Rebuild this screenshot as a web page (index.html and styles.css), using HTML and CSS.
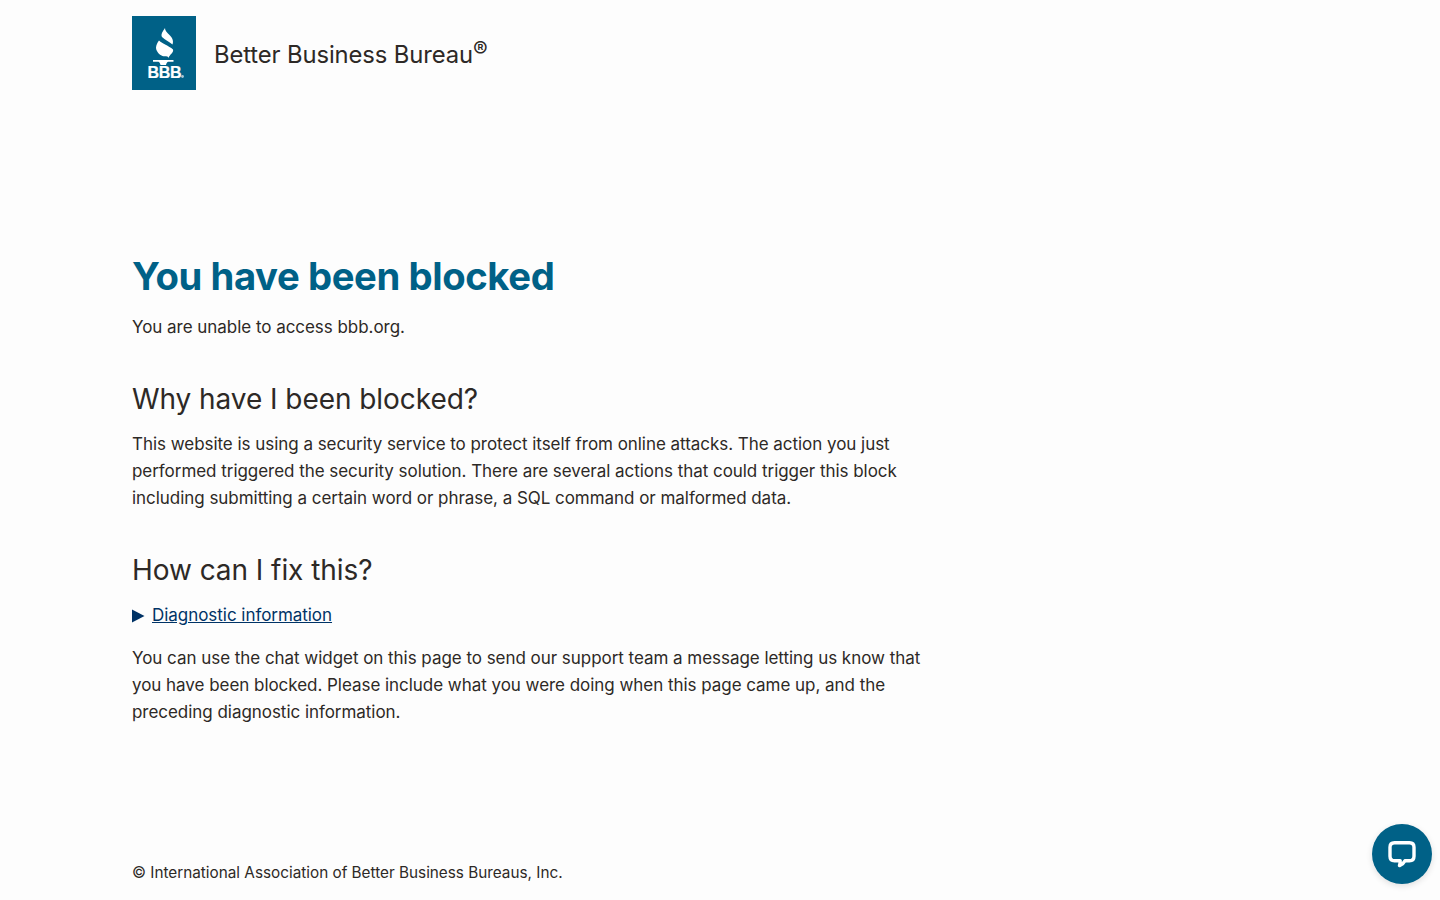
FILE: index.html
```html
<!DOCTYPE html>
<html lang="en">
<head>
<meta charset="utf-8">
<title>You have been blocked</title>
<link rel="stylesheet" href="styles.css">
</head>
<body>
<div class="page">
  <header class="brand">
    <div class="logo">
      <svg width="64" height="74" viewBox="0 0 64 74">
        <path fill="#fff" d="M33 12C32.800 14.500 35 16.500 37.500 19C40 21.500 42 24.500 40.500 28.500C37 25.500 33 24 30 21C28.500 18 31 15 33 12Z"/>
        <path fill="#fff" d="M27 24.500C30.500 28 36.500 29.500 41 33.500C42 36.500 38 38 36.500 42C36 39.500 33.500 41 30.500 40C26.500 38.500 24 34.500 24 31.500C24.300 28.500 25.500 26.500 27 24.500Z"/>
        <path fill="#fff" d="M21 44H41.500V45.700H36C35 46.300 34.300 47.300 34 49H28.500C28.300 47.300 27.500 46.300 26.500 45.700H21Z"/>
        <text class="logo-text" x="15.500" y="62">BBB</text>
        <circle cx="50.500" cy="60.500" r="1.400" fill="#a9c6d6"/>
      </svg>
    </div>
    <div class="brand-name">Better Business Bureau<sup class="reg">®</sup></div>
  </header>

  <main class="content">
    <h1 class="title">You have been blocked</h1>
    <p class="lead">You are unable to access bbb.org.</p>

    <h2 class="heading first">Why have I been blocked?</h2>
    <p class="text">This website is using a security service to protect itself from online attacks. The action you just performed triggered the security solution. There are several actions that could trigger this block including submitting a certain word or phrase, a SQL command or malformed data.</p>

    <h2 class="heading second">How can I fix this?</h2>
    <div class="diag">
      <svg class="arrow" width="13" height="14" viewBox="0 0 13 14"><path fill="#003366" d="M0 .5 12.500 7 0 13.500Z"/></svg>
      <a class="diag-link" href="#">Diagnostic information</a>
    </div>
    <p class="text after">You can use the chat widget on this page to send our support team a message letting us know that you have been blocked. Please include what you were doing when this page came up, and the preceding diagnostic information.</p>
  </main>

  <footer class="foot">© International Association of Better Business Bureaus, Inc.</footer>
</div>

<button class="chat" aria-label="Open chat">
  <svg width="32" height="32" viewBox="0 0 32 32">
    <path fill="none" stroke="#fff" stroke-width="3.400" stroke-linejoin="round" d="M8.500 4.800H23.500C26.300 4.800 28 6.500 28 9.300V18.200C28 21 26.300 22.700 23.500 22.700H19C18 24.800 16 26.600 13.500 27.600C14 26 14.200 24.300 14.200 22.700H8.500C5.700 22.700 4 21 4 18.200V9.300C4 6.500 5.700 4.800 8.500 4.800Z"/>
  </svg>
</button>
</body>
</html>
```

FILE: styles.css
```css
* { box-sizing: border-box; }
html, body { margin: 0; padding: 0; height: 100%; }
body {
  background: #fdfdfd;
  color: #2d2926;
  font-family: Inter, "Liberation Sans", sans-serif;
  font-size: 17px;
  line-height: 27px;
  letter-spacing: -0.040px;
  overflow: hidden;
}
.page {
  height: 900px;
  padding: 16px 132px 0;
  display: flex;
  flex-direction: column;
}
.brand {
  display: flex;
  align-items: center;
  gap: 18px;
  height: 74px;
}
.logo {
  width: 64px;
  height: 74px;
  background: #006187;
  flex: none;
}
.logo svg { display: block; }
.logo-text {
  font-family: "Liberation Sans", Arial, sans-serif;
  font-weight: 700;
  font-size: 16px;
  fill: #fff;
  letter-spacing: -0.300px;
  stroke: #fff;
  stroke-width: 0.200px;
}
.brand-name {
  font-size: 23.800px;
  line-height: 29px;
  letter-spacing: -0.100px;
  padding-top: 2px;
}
.reg {
  font-size: 22px;
  line-height: 0;
  vertical-align: 6px;
  letter-spacing: 0;
}
.content { width: 800px; }
.title {
  margin: 160px 0 0;
  font-size: 38.250px;
  line-height: 52px;
  font-weight: 700;
  letter-spacing: -0.400px;
  color: #006187;
}
.lead { margin: 12px 0 0; }
.heading {
  margin: 0;
  font-size: 28px;
  line-height: 36px;
  font-weight: 400;
  letter-spacing: -0.060px;
}
.first { margin-top: 40px; }
.second { margin-top: 40px; }
.text { margin: 14px 0 0; }
.after { margin-top: 16px; }
.diag {
  margin-top: 14px;
  display: flex;
  align-items: center;
  gap: 7px;
}
.arrow { display: block; flex: none; }
.diag-link { color: #003366; text-decoration: underline; }
.foot {
  position: absolute;
  left: 132px;
  top: 860px;
  font-size: 15.300px;
  line-height: 26px;
  letter-spacing: 0;
}
.chat {
  position: absolute;
  left: 1372px;
  top: 824px;
  width: 60px;
  height: 60px;
  border: 0;
  padding: 0;
  border-radius: 50%;
  background: #006187;
  box-shadow: 0 2px 6px rgba(0, 0, 0, .12);
  display: flex;
  align-items: center;
  justify-content: center;
}
```
